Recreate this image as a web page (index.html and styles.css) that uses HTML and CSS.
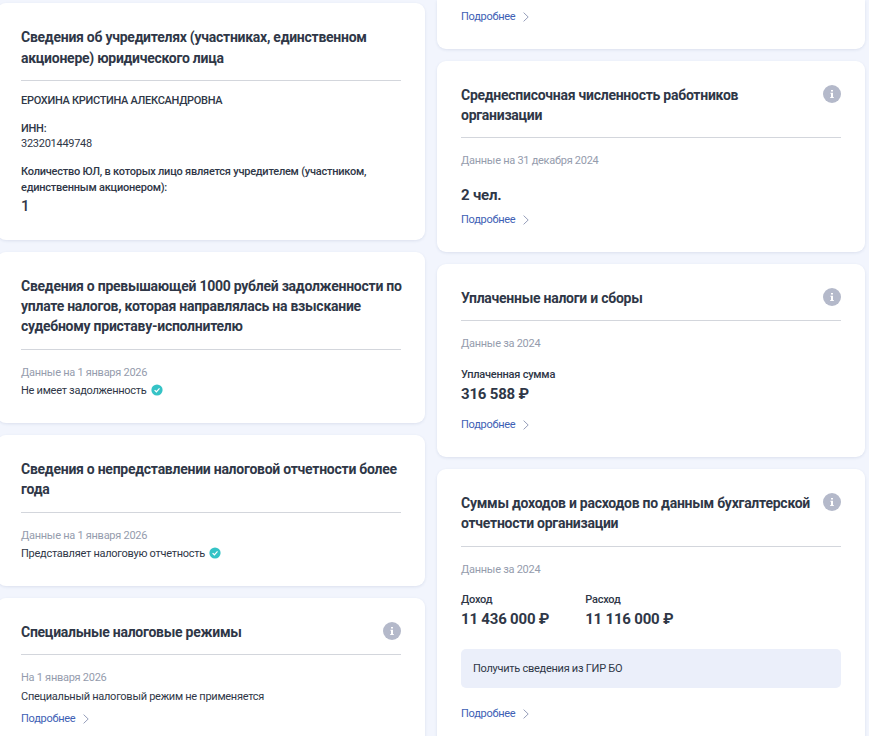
FILE: index.html
```
<!DOCTYPE html>
<html lang="ru">
<head>
  <meta charset="UTF-8">
  <meta name="viewport" content="width=device-width, initial-scale=1.0">
  <title>Сведения об организации</title>
  <link rel="stylesheet" href="styles.css">
</head>
<body>
  <svg class="sprite" xmlns="http://www.w3.org/2000/svg">
    <symbol id="info" viewBox="0 0 18 18">
      <circle cx="9" cy="9" r="9" fill="#b4b9ca"/>
      <path d="M8 5h2v1.6H8zM7.4 7.7H10v4.4h.8v1H7.2v-1H8V8.7h-.6z" fill="#fff"/>
    </symbol>
    <symbol id="check" viewBox="0 0 12 12">
      <circle cx="6" cy="6" r="5.6" fill="#35c3c6"/>
      <path d="M3.6 6.1l1.8 1.7 3.1-3.4" fill="none" stroke="#fff" stroke-width="1.2"/>
    </symbol>
    <symbol id="arrow" viewBox="0 0 6 10">
      <path d="M.6.6L5.2 5 .6 9.4" fill="none" stroke="#969eba" stroke-width="1"/>
    </symbol>
  </svg>

  <div class="page">
    <div class="column column-left">
      <section class="card">
        <div class="card-head head-loose">
          <h2>Сведения об учредителях (участниках, единственном акционере) юридического лица</h2>
        </div>
        <div class="label founder">ЕРОХИНА КРИСТИНА АЛЕКСАНДРОВНА</div>
        <div class="label field">ИНН:</div>
        <div class="inn">323201449748</div>
        <div class="label field">Количество ЮЛ, в которых лицо является учредителем (участником, единственным акционером):</div>
        <div class="count">1</div>
      </section>

      <section class="card">
        <div class="card-head head-tall">
          <h2>Сведения о превышающей 1000 рублей задолженности по уплате налогов, которая направлялась на взыскание судебному приставу-исполнителю</h2>
        </div>
        <div class="date">Данные на 1 января 2026</div>
        <div class="status">Не имеет задолженность <svg class="check"><use href="#check"/></svg></div>
      </section>

      <section class="card">
        <div class="card-head head-tall">
          <h2>Сведения о непредставлении налоговой отчетности более года</h2>
        </div>
        <div class="date">Данные на 1 января 2026</div>
        <div class="status">Представляет налоговую отчетность <svg class="check"><use href="#check"/></svg></div>
      </section>

      <section class="card">
        <div class="card-head">
          <h2>Специальные налоговые режимы</h2>
          <svg class="info"><use href="#info"/></svg>
        </div>
        <div class="date">На 1 января 2026</div>
        <div class="regime">Специальный налоговый режим не применяется</div>
        <a class="more" href="#">Подробнее <svg class="arrow"><use href="#arrow"/></svg></a>
      </section>
    </div>

    <div class="column">
      <section class="card card-cut">
        <a class="more" href="#">Подробнее <svg class="arrow"><use href="#arrow"/></svg></a>
      </section>

      <section class="card">
        <div class="card-head">
          <h2>Среднесписочная численность работников организации</h2>
          <svg class="info"><use href="#info"/></svg>
        </div>
        <div class="date">Данные на 31 декабря 2024</div>
        <div class="value staff">2 чел.</div>
        <a class="more more-staff" href="#">Подробнее <svg class="arrow"><use href="#arrow"/></svg></a>
      </section>

      <section class="card">
        <div class="card-head">
          <h2>Уплаченные налоги и сборы</h2>
          <svg class="info"><use href="#info"/></svg>
        </div>
        <div class="date">Данные за 2024</div>
        <div class="paid">
          <div class="label">Уплаченная сумма</div>
          <div class="value">316 588 ₽</div>
        </div>
        <a class="more" href="#">Подробнее <svg class="arrow"><use href="#arrow"/></svg></a>
      </section>

      <section class="card">
        <div class="card-head head-tall">
          <h2>Суммы доходов и расходов по данным бухгалтерской отчетности организации</h2>
          <svg class="info"><use href="#info"/></svg>
        </div>
        <div class="date">Данные за 2024</div>
        <div class="sums">
          <div class="sum">
            <div class="label">Доход</div>
            <div class="value">11 436 000 ₽</div>
          </div>
          <div class="sum">
            <div class="label">Расход</div>
            <div class="value">11 116 000 ₽</div>
          </div>
        </div>
        <div class="notice">Получить сведения из ГИР БО</div>
        <a class="more" href="#">Подробнее <svg class="arrow"><use href="#arrow"/></svg></a>
      </section>
    </div>
  </div>
</body>
</html>
```

FILE: styles.css
```
* {
  box-sizing: border-box;
}

body {
  margin: 0;
  height: 736px;
  overflow: hidden;
  background: #f2f5fd;
  color: #2f3747;
  font-family: Roboto, "Liberation Sans", sans-serif;
  font-size: 11px;
  line-height: 16px;
  letter-spacing: -0.27px;
}

.sprite {
  display: none;
}

.page {
  display: flex;
  gap: 12px;
  width: 868px;
  margin-left: -3px;
}

.column {
  display: flex;
  flex-direction: column;
  gap: 12px;
  width: 428px;
}

.column-left {
  padding-top: 3px;
}

.card {
  padding: 24px;
  background: #fff;
  border-radius: 9px;
  box-shadow: 0 1px 3px rgba(60, 80, 130, 0.12);
}

.card-cut {
  padding-top: 9px;
  border-radius: 0 0 9px 9px;
}

.card:last-child {
  padding-bottom: 40px;
}

.card-head {
  display: flex;
  justify-content: space-between;
  gap: 12px;
  padding-bottom: 12px;
  margin-bottom: 15px;
  border-bottom: 1px solid #d3d6dc;
}

.head-tall {
  padding-bottom: 13px;
}

.head-loose {
  padding-bottom: 11px;
  margin-bottom: 12px;
}

h2 {
  margin: 0 -2px 0 0;
  font-size: 14px;
  font-weight: 700;
  line-height: 20px;
  letter-spacing: -0.26px;
}

.head-loose h2 {
  line-height: 21px;
}

.info {
  flex: none;
  width: 18px;
  height: 18px;
}

.label {
  font-weight: 500;
  letter-spacing: -0.23px;
}

.founder {
  letter-spacing: -0.3px;
}

.field {
  margin-top: 12px;
}

.inn {
  margin-bottom: 14px;
  line-height: 13px;
}

.inn + .field {
  margin-top: 0;
}

.count {
  font-size: 15px;
  font-weight: 500;
  line-height: 20px;
}

.date {
  color: #959cad;
}

.status {
  display: flex;
  align-items: center;
  gap: 4px;
  margin-top: 2px;
}

.check {
  width: 12px;
  height: 12px;
  margin-bottom: 2px;
}

.regime {
  margin-top: 3px;
}

.more {
  display: flex;
  align-items: center;
  gap: 8px;
  margin-top: 6px;
  color: #405fb5;
  text-decoration: none;
}

.more-staff {
  margin-top: 7px;
}

.card-cut .more {
  margin-top: 0;
}

.arrow {
  width: 6px;
  height: 10px;
  margin-bottom: 1px;
}

.value {
  font-size: 15px;
  font-weight: 700;
  line-height: 20px;
  letter-spacing: -0.2px;
}

.staff {
  margin-top: 16px;
}

.paid {
  margin: 15px 0 13px;
}

.paid .value,
.sum .value {
  margin-top: 1px;
}

.sums {
  display: flex;
  gap: 36px;
  margin: 14px 0 20px;
}

.notice {
  margin-bottom: 18px;
  padding: 12px 12px 11px;
  background: #ebeffa;
  border-radius: 5px;
}

.paid + .more,
.notice + .more {
  margin-top: 0;
}
```
